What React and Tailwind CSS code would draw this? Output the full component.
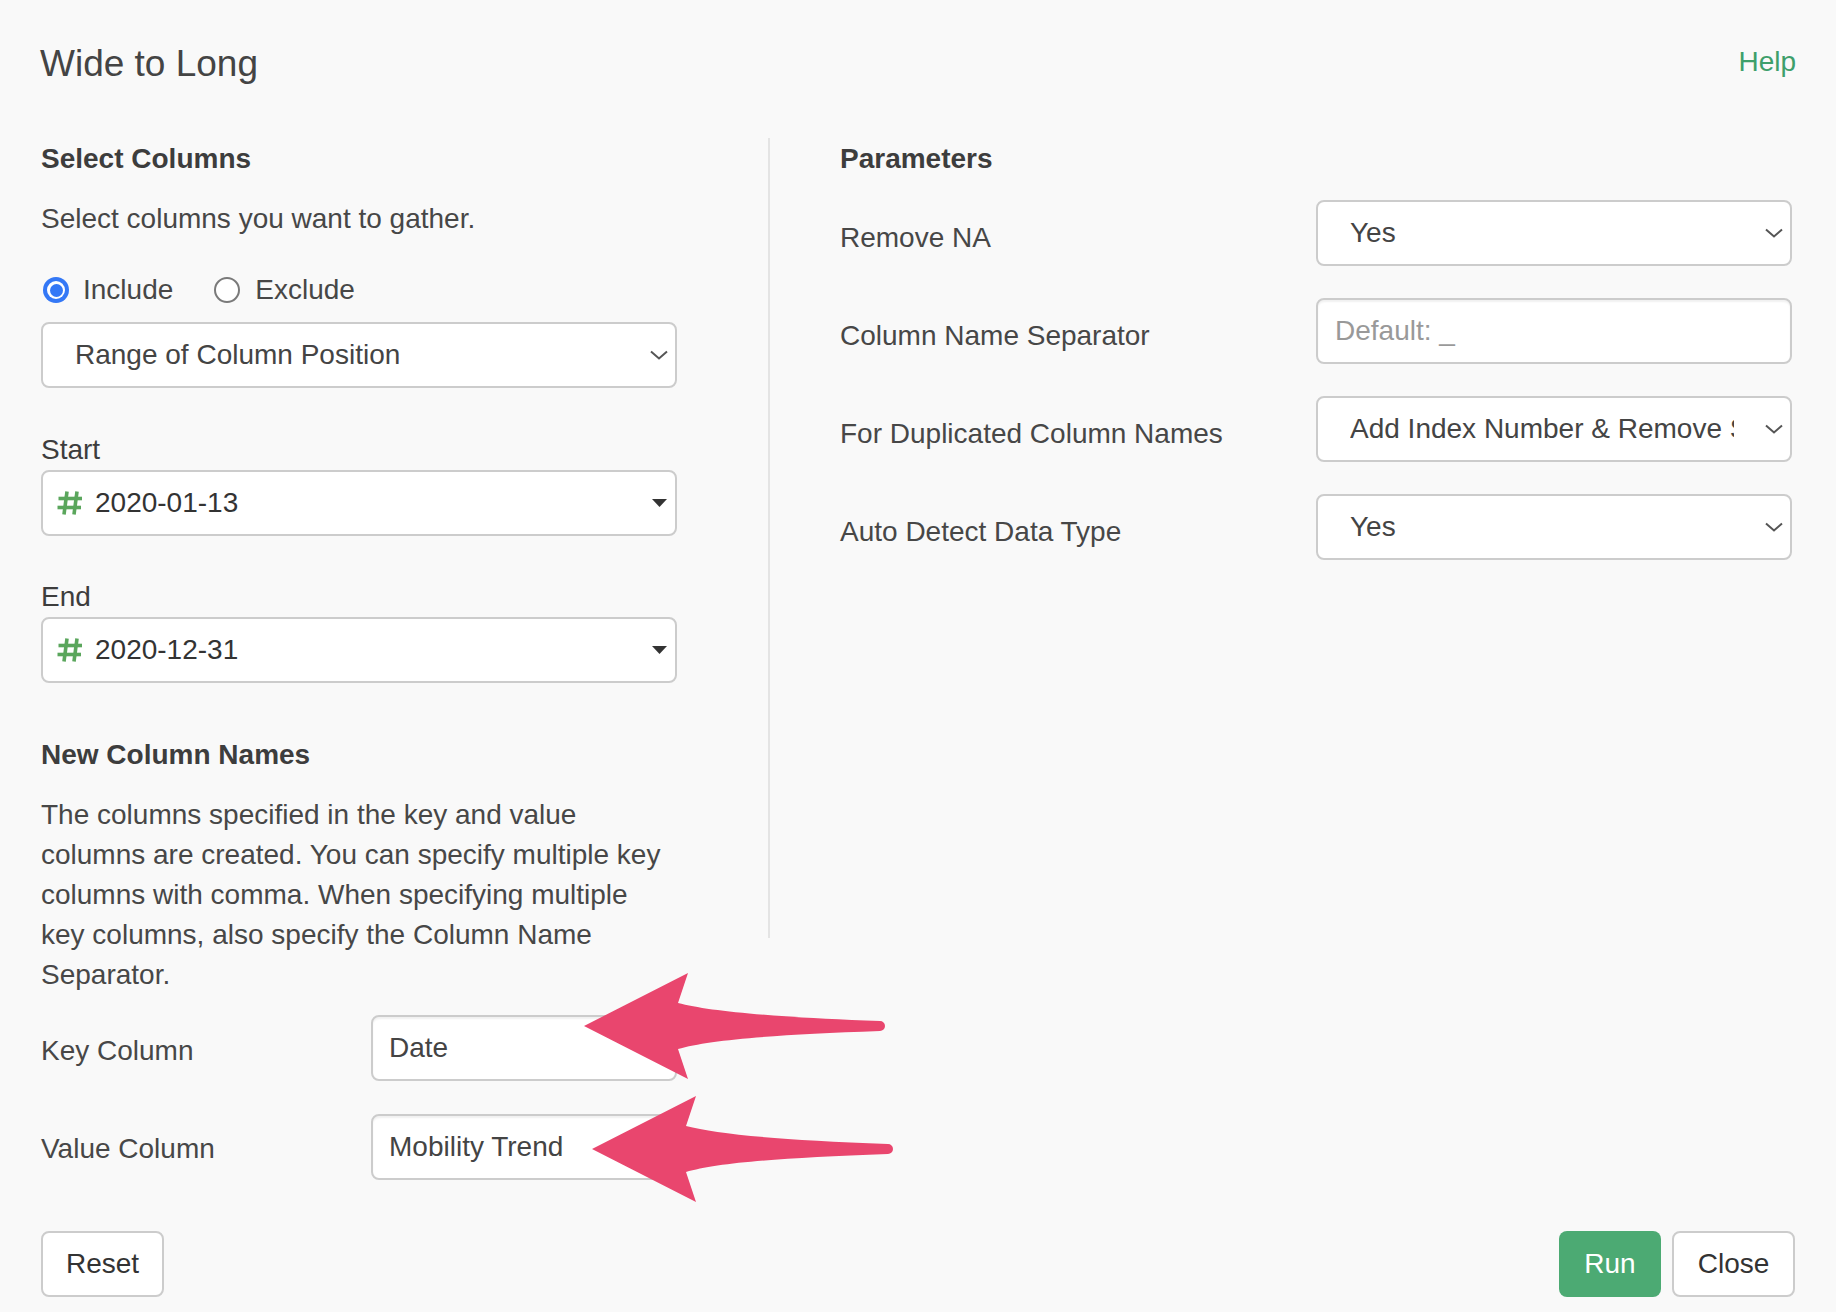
import React from "react";

function Chevron() {
  return (
    <svg width="18" height="10" viewBox="0 0 18 10" className="shrink-0">
      <path d="M1 1.5 L9 8.5 L17 1.5" fill="none" stroke="#555" strokeWidth="2" />
    </svg>
  );
}

function Caret() {
  return (
    <svg width="15" height="8" viewBox="0 0 15 8" className="shrink-0">
      <path d="M0 0 L15 0 L7.5 8 Z" fill="#333" />
    </svg>
  );
}

function Hash() {
  return (
    <svg width="26" height="24" viewBox="0 0 26 24" className="shrink-0">
      <g stroke="#5aa65c" strokeWidth="3.6" fill="none">
        <path d="M10 0.5 L7 23.5" />
        <path d="M20 0.5 L17 23.5" />
        <path d="M1.5 7.5 L25 7.5" />
        <path d="M0.5 16.5 L24 16.5" />
      </g>
    </svg>
  );
}

function Arrow({ className }) {
  return (
    <svg className={className} width="302" height="108" viewBox="0 0 302 108">
      <path
        d="M0 53 L104 0 L94 30 C125 38 185 44 296 48 A5 5 0 0 1 296 58 C185 62 125 67 94 76 L104 106 Z"
        fill="#e9466e"
      />
    </svg>
  );
}

function SelectBox({ children, className = "" }) {
  return (
    <div
      className={
        "h-[66px] bg-white border-2 border-[#ccc] rounded-[8px] flex items-center justify-between pl-[32px] pr-[7px] text-[28px] text-[#444] " +
        className
      }
    >
      {children}
      <Chevron />
    </div>
  );
}

function DateSelect({ value }) {
  return (
    <div className="h-[66px] bg-white border-2 border-[#ccc] rounded-[8px] flex items-center justify-between pl-[14px] pr-[8px] text-[28px]">
      <div className="flex items-center">
        <Hash />
        <span className="ml-[12px] text-[#333]">{value}</span>
      </div>
      <Caret />
    </div>
  );
}

function TextInput({ value, placeholder, className = "" }) {
  return (
    <div
      className={
        "h-[66px] bg-white border-2 border-[#ccc] rounded-[8px] flex items-center shadow-[inset_0_2px_2px_rgba(0,0,0,0.06)] text-[28px] " +
        className
      }
    >
      {value ? <span className="text-[#444]">{value}</span> : <span className="text-[#999]">{placeholder}</span>}
    </div>
  );
}

function ParamRow({ label, children }) {
  return (
    <div className="flex">
      <div className="w-[476px] pt-[18px] leading-[40px] text-[28px] text-[#474747]">{label}</div>
      <div className="w-[476px]">{children}</div>
    </div>
  );
}

export default function App() {
  return (
    <div className="relative w-[1836px] min-h-[1312px] bg-[#f9f9f9] font-['Liberation_Sans',Arial,sans-serif] text-[#474747]">
      <div className="flex justify-between items-start px-[40px] pt-[42px]">
        <div className="text-[37px] leading-[44px] text-[#444]">Wide to Long</div>
        <div className="text-[28px] leading-[40px] text-[#3e9f6b]">Help</div>
      </div>

      <div className="flex items-start px-[41px] mt-[52px]">
        {/* Left column */}
        <div className="w-[636px] flex flex-col">
          <div className="text-[28px] leading-[42px] font-bold text-[#3d3d3d]">Select Columns</div>
          <div className="mt-[19px] text-[28px] leading-[40px]">Select columns you want to gather.</div>
          <div className="mt-[31px] h-[40px] flex items-center text-[28px]">
            <div className="w-[26px] h-[26px] rounded-full bg-[#3478f6] flex items-center justify-center ml-[2px]">
              <div className="w-[18px] h-[18px] rounded-full bg-white flex items-center justify-center">
                <div className="w-[13px] h-[13px] rounded-full bg-[#3478f6]" />
              </div>
            </div>
            <span className="ml-[14px]">Include</span>
            <div className="ml-[41px] w-[26px] h-[26px] rounded-full bg-white border-2 border-[#7a7a7a]" />
            <span className="ml-[15px]">Exclude</span>
          </div>
          <SelectBox className="mt-[12px]">
            <span>Range of Column Position</span>
          </SelectBox>

          <div className="mt-[42px] text-[28px] leading-[40px] text-[#3d3d3d]">Start</div>
          <DateSelect value="2020-01-13" />

          <div className="mt-[41px] text-[28px] leading-[40px] text-[#3d3d3d]">End</div>
          <DateSelect value="2020-12-31" />

          <div className="mt-[52px] text-[28px] leading-[40px] font-bold text-[#3d3d3d]">New Column Names</div>
          <div className="mt-[20px] text-[28px] leading-[40px] whitespace-nowrap">
            <div>The columns specified in the key and value</div>
            <div>columns are created. You can specify multiple key</div>
            <div>columns with comma. When specifying multiple</div>
            <div>key columns, also specify the Column Name</div>
            <div>Separator.</div>
          </div>

          <div className="mt-[20px] flex items-center">
            <div className="w-[330px] pt-[6px] text-[28px] leading-[40px]">Key Column</div>
            <TextInput value="Date" className="w-[306px] pl-[16px]" />
          </div>
          <div className="mt-[33px] flex items-center">
            <div className="w-[330px] pt-[4px] text-[28px] leading-[40px]">Value Column</div>
            <TextInput value="Mobility Trend" className="w-[306px] pl-[16px]" />
          </div>
        </div>

        {/* Divider */}
        <div className="ml-[91px] w-[2px] h-[800px] bg-[#e4e4e4] shrink-0" />

        {/* Right column */}
        <div className="ml-[70px] flex flex-col">
          <div className="text-[28px] leading-[42px] font-bold text-[#3d3d3d]">Parameters</div>
          <div className="mt-[20px] flex flex-col gap-[32px]">
            <ParamRow label="Remove NA">
              <SelectBox>
                <span>Yes</span>
              </SelectBox>
            </ParamRow>
            <ParamRow label="Column Name Separator">
              <TextInput placeholder="Default: _" className="pl-[17px]" />
            </ParamRow>
            <ParamRow label="For Duplicated Column Names">
              <SelectBox>
                <span className="block w-[384px] overflow-hidden whitespace-nowrap">Add Index Number &amp; Remove Spaces</span>
              </SelectBox>
            </ParamRow>
            <ParamRow label="Auto Detect Data Type">
              <SelectBox>
                <span>Yes</span>
              </SelectBox>
            </ParamRow>
          </div>
        </div>
      </div>

      <div className="flex justify-between items-center px-[41px] mt-[51px] pb-[14px]">
        <button className="h-[66px] w-[123px] bg-white border-2 border-[#ccc] rounded-[8px] text-[28px] text-[#333]">Reset</button>
        <div className="flex gap-[11px]">
          <button className="h-[66px] w-[102px] bg-[#4caa73] rounded-[8px] text-[28px] text-white">Run</button>
          <button className="h-[66px] w-[123px] bg-white border-2 border-[#ccc] rounded-[8px] text-[28px] text-[#333]">Close</button>
        </div>
      </div>

      <Arrow className="absolute left-[584px] top-[973px]" />
      <Arrow className="absolute left-[592px] top-[1096px]" />
    </div>
  );
}
